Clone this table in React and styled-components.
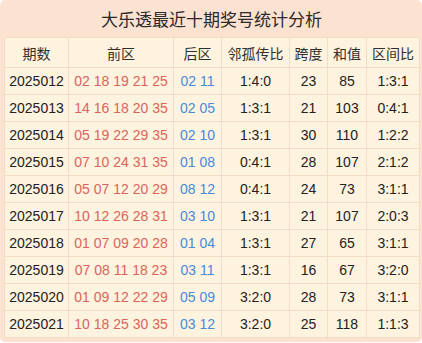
import React from "react";
import styled, { createGlobalStyle } from "styled-components";

const GlobalStyle = createGlobalStyle`
  body {
    margin: 0;
    background: #ffffff;
    font-family: "Liberation Sans", "Noto Sans CJK SC", sans-serif;
  }
`;

const Panel = styled.div`
  width: 422px;
  height: 342px;
  box-sizing: border-box;
  padding: 0 3px 4px 4px;
  background: #fbe2d1;
  border-radius: 5px;
  display: flex;
  flex-direction: column;
`;

const Title = styled.div`
  height: 38px;
  display: flex;
  align-items: center;
  justify-content: center;
  font-size: 17px;
  color: #2a2a2a;
  font-family: "Noto Sans CJK SC", sans-serif;
`;

const Table = styled.table`
  border-collapse: collapse;
  table-layout: fixed;
  width: 415px;
  background: #fef3df;
`;

const HeadCell = styled.th`
  height: 29px;
  padding: 0;
  border: 1px solid #f3dcc4;
  font-weight: normal;
  font-size: 14px;
  color: #2f2f2f;
  font-family: "Noto Sans CJK SC", sans-serif;
  text-align: center;
`;

const Cell = styled.td`
  height: 26px;
  padding: 0;
  border: 1px solid #f3dcc4;
  font-size: 14px;
  text-align: center;
  white-space: nowrap;
  color: ${(props) =>
    props.$tone === "red" ? "#dc645c" : props.$tone === "blue" ? "#4a89d8" : "#222"};
`;

const columns = [
  { name: "期数", width: 64 },
  { name: "前区", width: 105 },
  { name: "后区", width: 48 },
  { name: "邻孤传比", width: 68 },
  { name: "跨度", width: 38 },
  { name: "和值", width: 39 },
  { name: "区间比", width: 53 },
];

const rows = [
  ["2025012", "02 18 19 21 25", "02 11", "1:4:0", "23", "85", "1:3:1"],
  ["2025013", "14 16 18 20 35", "02 05", "1:3:1", "21", "103", "0:4:1"],
  ["2025014", "05 19 22 29 35", "02 10", "1:3:1", "30", "110", "1:2:2"],
  ["2025015", "07 10 24 31 35", "01 08", "0:4:1", "28", "107", "2:1:2"],
  ["2025016", "05 07 12 20 29", "08 12", "0:4:1", "24", "73", "3:1:1"],
  ["2025017", "10 12 26 28 31", "03 10", "1:3:1", "21", "107", "2:0:3"],
  ["2025018", "01 07 09 20 28", "01 04", "1:3:1", "27", "65", "3:1:1"],
  ["2025019", "07 08 11 18 23", "03 11", "1:3:1", "16", "67", "3:2:0"],
  ["2025020", "01 09 12 22 29", "05 09", "3:2:0", "28", "73", "3:1:1"],
  ["2025021", "10 18 25 30 35", "03 12", "3:2:0", "25", "118", "1:1:3"],
];

const tones = [null, "red", "blue", null, null, null, null];

export default function App() {
  return (
    <>
      <GlobalStyle />
      <Panel>
        <Title>大乐透最近十期奖号统计分析</Title>
        <Table>
          <colgroup>
            {columns.map((c) => (
              <col key={c.name} style={{ width: c.width }} />
            ))}
          </colgroup>
          <thead>
            <tr>
              {columns.map((c) => (
                <HeadCell key={c.name}>{c.name}</HeadCell>
              ))}
            </tr>
          </thead>
          <tbody>
            {rows.map((r) => (
              <tr key={r[0]}>
                {r.map((v, i) => (
                  <Cell key={i} $tone={tones[i]}>
                    {v}
                  </Cell>
                ))}
              </tr>
            ))}
          </tbody>
        </Table>
      </Panel>
    </>
  );
}
